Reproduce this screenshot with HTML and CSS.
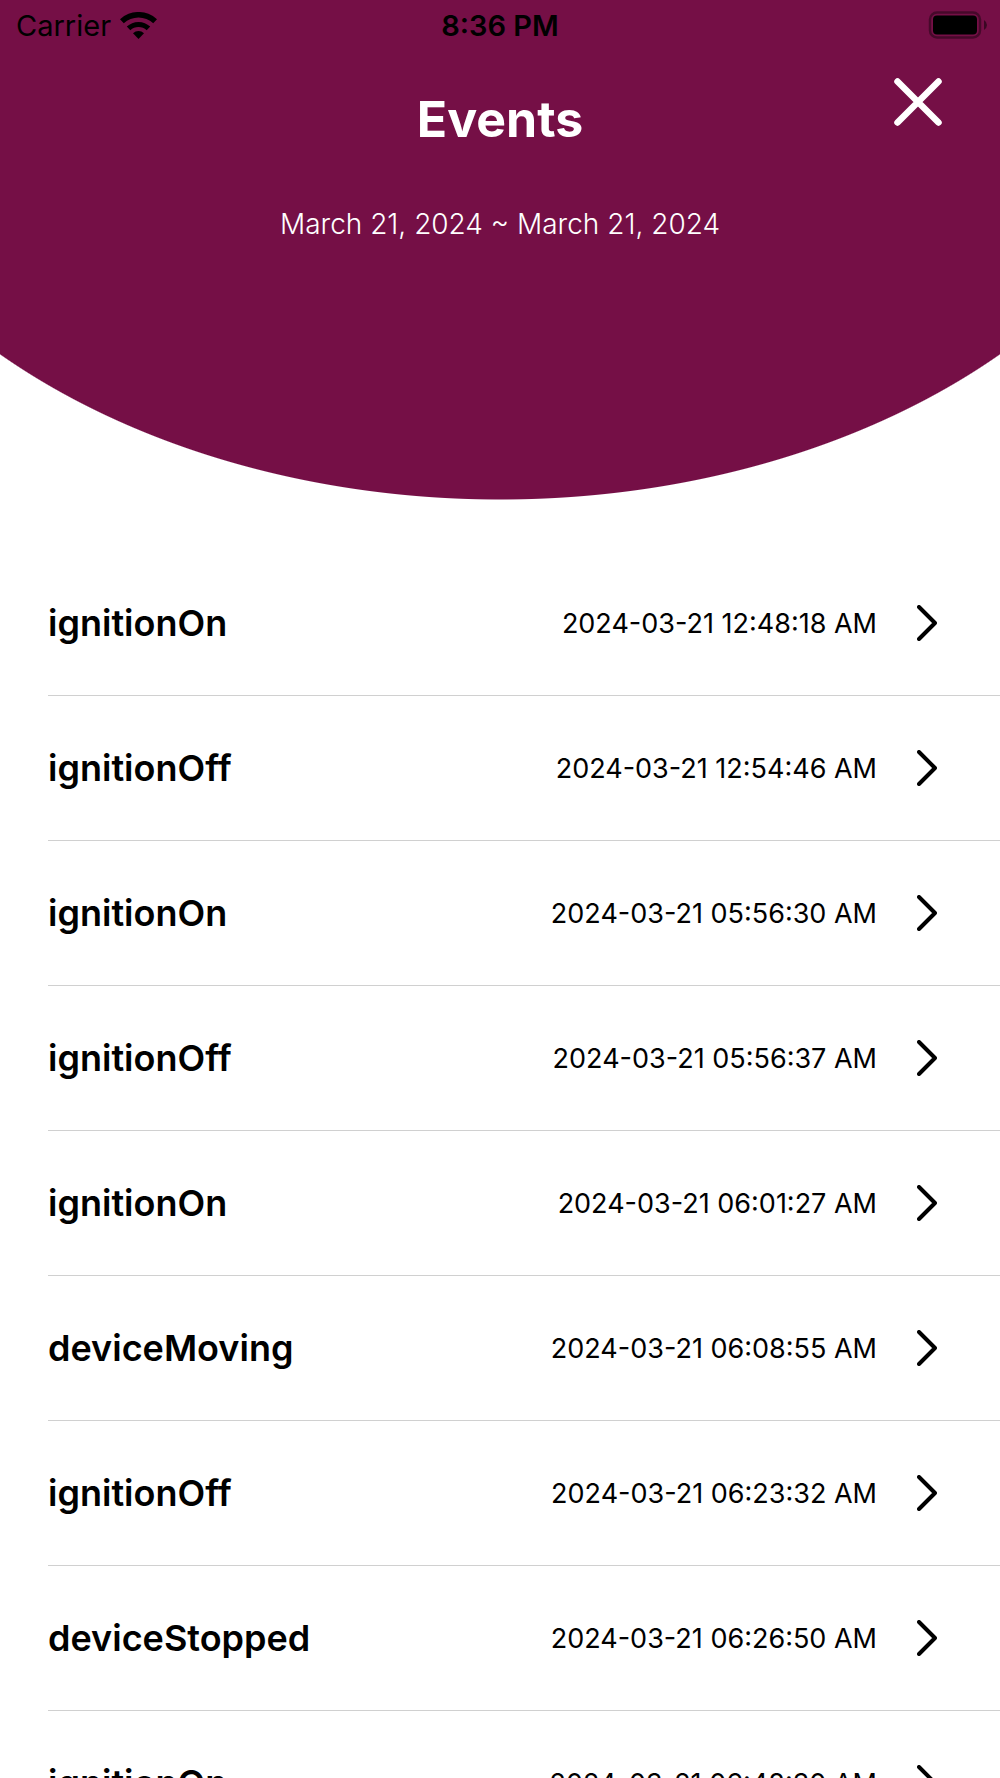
FILE: index.html
```html
<!DOCTYPE html>
<html lang="en">
<head>
<meta charset="utf-8">
<meta name="viewport" content="width=device-width, initial-scale=1">
<title>Events</title>
<link rel="stylesheet" href="styles.css">
</head>
<body>
<header class="hero">
  <div class="status">
    <div class="carrier"><span>Carrier</span>
      <svg class="wifi" viewBox="0 0 37 27" aria-hidden="true"><path d="M0 7.300A27 27 0 0 1 37 7.300L33.200 11.300A21.500 21.500 0 0 0 3.800 11.300z"/><path d="M6.800 14.600A17 17 0 0 1 30.200 14.600L26.700 18.200A12 12 0 0 0 10.300 18.200z"/><path d="M13 21.200A8 8 0 0 1 24 21.200L18.500 27z"/></svg>
    </div>
    <time class="clock">8:36 PM</time>
    <svg class="battery" viewBox="0 0 60 28" aria-hidden="true"><rect class="shell" x="2" y="1.500" width="50" height="25" rx="7"/><rect x="5" y="4.500" width="44" height="19" rx="4"/><path class="cap" d="M56 9v10q3-2 3-5t-3-5z"/></svg>
  </div>
  <div class="title-row">
    <h1 class="title">Events</h1>
    <button class="close" type="button" aria-label="Close"><svg viewBox="0 0 50 50" aria-hidden="true"><path d="M4.500 4.500l41 41M45.500 4.500l-41 41"/></svg></button>
  </div>
  <p class="range">March 21, 2024 ~ March 21, 2024</p>
</header>
<main class="list">
  <ul class="events">
    <li><a class="event" href="#"><span class="name">ignitionOn</span><time>2024-03-21 12:48:18 AM</time><svg class="chevron" viewBox="0 0 20 36" aria-hidden="true"><path d="M2 2l16 16-16 16"/></svg></a></li>
    <li><a class="event" href="#"><span class="name">ignitionOff</span><time>2024-03-21 12:54:46 AM</time><svg class="chevron" viewBox="0 0 20 36" aria-hidden="true"><path d="M2 2l16 16-16 16"/></svg></a></li>
    <li><a class="event" href="#"><span class="name">ignitionOn</span><time>2024-03-21 05:56:30 AM</time><svg class="chevron" viewBox="0 0 20 36" aria-hidden="true"><path d="M2 2l16 16-16 16"/></svg></a></li>
    <li><a class="event" href="#"><span class="name">ignitionOff</span><time>2024-03-21 05:56:37 AM</time><svg class="chevron" viewBox="0 0 20 36" aria-hidden="true"><path d="M2 2l16 16-16 16"/></svg></a></li>
    <li><a class="event" href="#"><span class="name">ignitionOn</span><time>2024-03-21 06:01:27 AM</time><svg class="chevron" viewBox="0 0 20 36" aria-hidden="true"><path d="M2 2l16 16-16 16"/></svg></a></li>
    <li><a class="event" href="#"><span class="name">deviceMoving</span><time>2024-03-21 06:08:55 AM</time><svg class="chevron" viewBox="0 0 20 36" aria-hidden="true"><path d="M2 2l16 16-16 16"/></svg></a></li>
    <li><a class="event" href="#"><span class="name">ignitionOff</span><time>2024-03-21 06:23:32 AM</time><svg class="chevron" viewBox="0 0 20 36" aria-hidden="true"><path d="M2 2l16 16-16 16"/></svg></a></li>
    <li><a class="event" href="#"><span class="name">deviceStopped</span><time>2024-03-21 06:26:50 AM</time><svg class="chevron" viewBox="0 0 20 36" aria-hidden="true"><path d="M2 2l16 16-16 16"/></svg></a></li>
    <li><a class="event" href="#"><span class="name">ignitionOn</span><time>2024-03-21 06:48:30 AM</time><svg class="chevron" viewBox="0 0 20 36" aria-hidden="true"><path d="M2 2l16 16-16 16"/></svg></a></li>
  </ul>
</main>
</body>
</html>
```
FILE: styles.css
```css
* { box-sizing: border-box; }
body {
  margin: 0;
  height: 100vh;
  display: flex;
  flex-direction: column;
  background: #fff;
  color: #000;
  font-family: Inter, "Liberation Sans", sans-serif;
}
.hero {
  flex: none;
  padding-bottom: 258px;
  background: radial-gradient(ellipse 71% 100% at 50% 0, #750f46 99.8%, transparent 100%);
  color: #fff;
}
.status {
  display: grid;
  grid-template-columns: 1fr auto 1fr;
  align-items: center;
  height: 50px;
  padding: 0 12px;
  color: #000;
  font-size: 29px;
}
.carrier { display: flex; align-items: center; gap: 9px; padding-left: 4px; }
.wifi { width: 37px; height: 27px; }
.clock { font-weight: 600; }
.battery { width: 60px; height: 28px; justify-self: end; }
.shell { fill: none; stroke: #000; stroke-width: 2.5; opacity: 0.4; }
.cap { opacity: 0.5; }
.title-row {
  display: grid;
  grid-template-columns: 1fr auto 1fr;
  padding: 27px 57px 0;
}
.title { grid-column: 2; margin: 11px 0 0; font-size: 50px; line-height: 62px; font-weight: 700; }
.close { justify-self: end; align-self: start; width: 50px; height: 50px; padding: 0; border: 0; background: none; cursor: pointer; }
.close svg { display: block; }
.close path { fill: none; stroke: #fff; stroke-width: 6.5; stroke-linecap: round; }
.range { margin: 56px 0 0; text-align: center; font-size: 28px; line-height: 36px; font-weight: 300; }
.list { flex: 1; min-height: 0; overflow-y: auto; scrollbar-width: none; }
.events { margin: 0; padding: 51px 0 0 48px; list-style: none; }
.event {
  display: flex;
  align-items: center;
  height: 145px;
  padding-right: 63px;
  border-bottom: 1px solid #d0d0d0;
  color: inherit;
  text-decoration: none;
  font-size: 27px;
}
.name { flex: 1; font-size: 36px; font-weight: 600; }
.chevron { width: 20px; height: 36px; margin-left: 40px; fill: none; stroke: #000; stroke-width: 4; stroke-linecap: round; stroke-linejoin: round; }
```
